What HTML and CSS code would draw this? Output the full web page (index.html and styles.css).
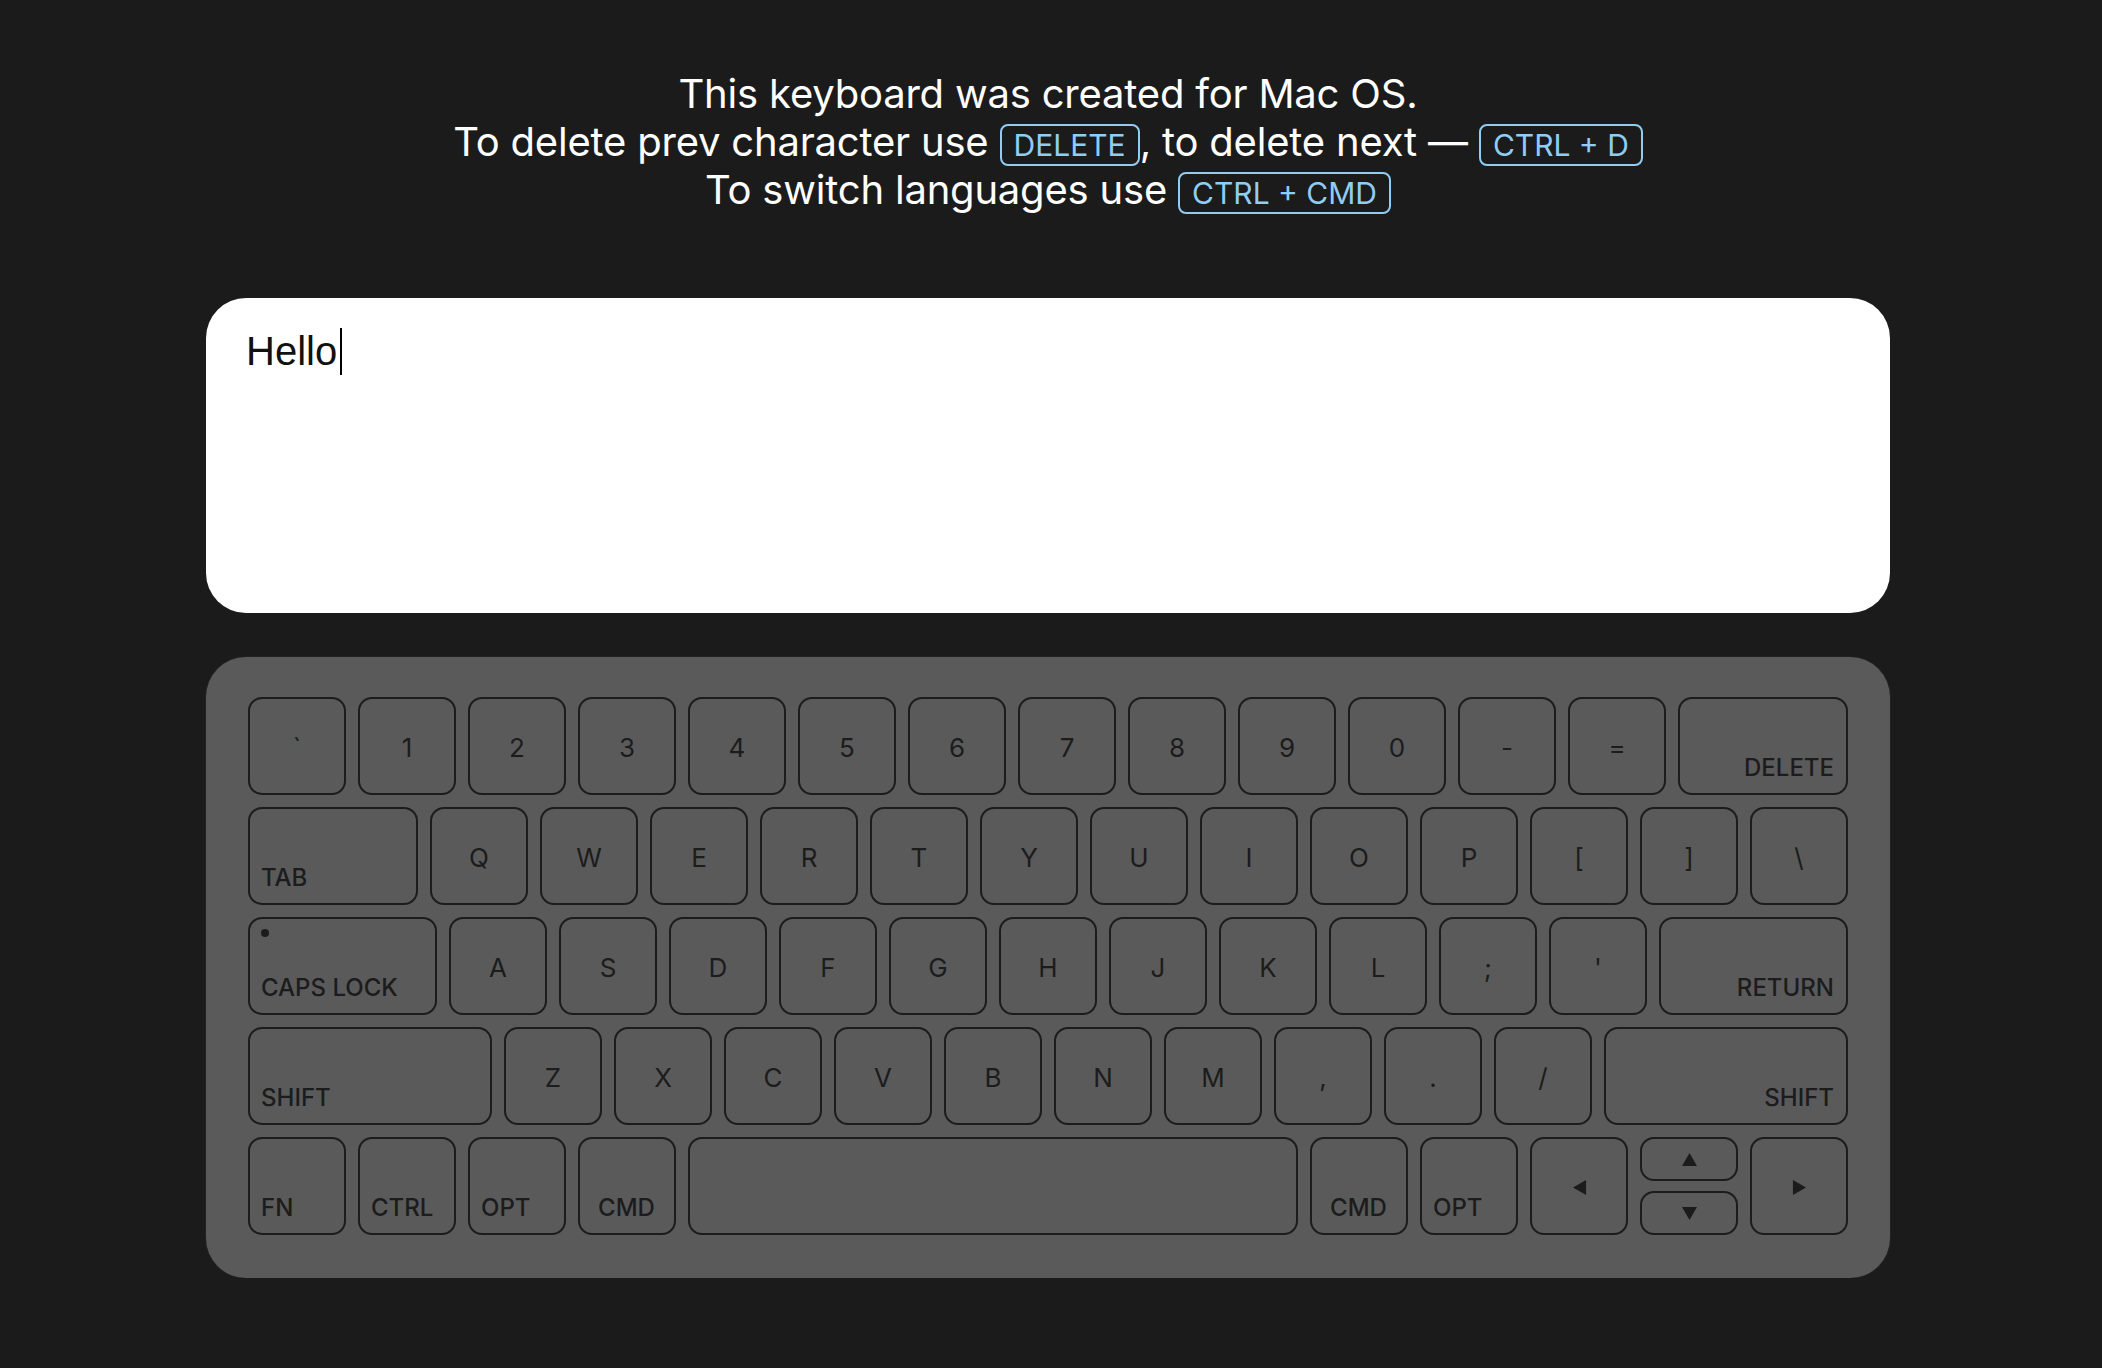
FILE: index.html
```html
<!DOCTYPE html>
<html lang="en">
<head>
    <meta charset="UTF-8">
    <meta name="viewport" content="width=device-width, initial-scale=1.0">
    <title>Virtual keyboard</title>
    <link rel="stylesheet" href="styles.css">
</head>
<body>
    <div class="page">
        <p class="hint">
            This keyboard was created for Mac OS.<br>
            To delete prev character use <span class="kbd">DELETE</span>, to delete next — <span class="kbd">CTRL + D</span><br>
            To switch languages use <span class="kbd">CTRL + CMD</span>
        </p>

        <div class="screen">Hello<span class="caret"></span></div>

        <div class="keyboard">
            <div class="row">
                <div class="key">`</div>
                <div class="key">1</div>
                <div class="key">2</div>
                <div class="key">3</div>
                <div class="key">4</div>
                <div class="key">5</div>
                <div class="key">6</div>
                <div class="key">7</div>
                <div class="key">8</div>
                <div class="key">9</div>
                <div class="key">0</div>
                <div class="key">-</div>
                <div class="key">=</div>
                <div class="key mod wide right">DELETE</div>
            </div>
            <div class="row">
                <div class="key mod wide">TAB</div>
                <div class="key">Q</div>
                <div class="key">W</div>
                <div class="key">E</div>
                <div class="key">R</div>
                <div class="key">T</div>
                <div class="key">Y</div>
                <div class="key">U</div>
                <div class="key">I</div>
                <div class="key">O</div>
                <div class="key">P</div>
                <div class="key">[</div>
                <div class="key">]</div>
                <div class="key">\</div>
            </div>
            <div class="row">
                <div class="key mod wide caps"><span class="led"></span><span>CAPS LOCK</span></div>
                <div class="key">A</div>
                <div class="key">S</div>
                <div class="key">D</div>
                <div class="key">F</div>
                <div class="key">G</div>
                <div class="key">H</div>
                <div class="key">J</div>
                <div class="key">K</div>
                <div class="key">L</div>
                <div class="key">;</div>
                <div class="key">'</div>
                <div class="key mod wide right">RETURN</div>
            </div>
            <div class="row">
                <div class="key mod wide">SHIFT</div>
                <div class="key">Z</div>
                <div class="key">X</div>
                <div class="key">C</div>
                <div class="key">V</div>
                <div class="key">B</div>
                <div class="key">N</div>
                <div class="key">M</div>
                <div class="key">,</div>
                <div class="key">.</div>
                <div class="key">/</div>
                <div class="key mod wide right">SHIFT</div>
            </div>
            <div class="row">
                <div class="key mod">FN</div>
                <div class="key mod">CTRL</div>
                <div class="key mod">OPT</div>
                <div class="key mod center">CMD</div>
                <div class="key wide"></div>
                <div class="key mod center">CMD</div>
                <div class="key mod">OPT</div>
                <div class="key">
                    <svg class="arrow" viewBox="0 0 14 16"><polygon points="0,8 14,0 14,16"/></svg>
                </div>
                <div class="updown">
                    <div class="key half">
                        <svg class="arrow" viewBox="0 0 16 14"><polygon points="8,0 16,14 0,14"/></svg>
                    </div>
                    <div class="key half">
                        <svg class="arrow" viewBox="0 0 16 14"><polygon points="0,0 16,0 8,14"/></svg>
                    </div>
                </div>
                <div class="key">
                    <svg class="arrow" viewBox="0 0 14 16"><polygon points="14,8 0,0 0,16"/></svg>
                </div>
            </div>
        </div>
    </div>
</body>
</html>
```

FILE: styles.css
```css
body {
    margin: 0;
    padding: 70px 6px 0 0;
    background-color: #1b1b1b;
    font-family: Inter, "Noto Sans", sans-serif;
}

.page {
    width: 1684px;
    margin: 0 auto;
}

.hint {
    margin: 0;
    color: #fff;
    font-size: 40px;
    line-height: 48px;
    letter-spacing: -0.2px;
    text-align: center;
}

.kbd {
    display: inline-block;
    padding: 0 12px;
    border: 2px solid #90cdf4;
    border-radius: 8px;
    color: #90cdf4;
    font-size: 30px;
    line-height: 38px;
    letter-spacing: 0;
    vertical-align: baseline;
}

.screen {
    box-sizing: border-box;
    height: 315px;
    margin-top: 84px;
    padding: 30px 40px;
    background-color: #fff;
    border-radius: 40px;
    color: #111;
    font-family: "Liberation Sans", Arial, sans-serif;
    font-size: 40px;
    line-height: 46px;
}

.caret {
    display: inline-block;
    width: 2px;
    height: 47px;
    margin-left: 3px;
    background-color: #000;
    vertical-align: top;
}

.keyboard {
    display: flex;
    flex-direction: column;
    gap: 12px;
    margin-top: 44px;
    padding: 40px 42px 43px;
    background-color: #5a5a5a;
    border-radius: 40px;
    box-shadow: 0 0 0 1px #222;
}

.row {
    display: flex;
    gap: 12px;
}

.key {
    box-sizing: border-box;
    display: flex;
    align-items: center;
    justify-content: center;
    flex: 0 0 98px;
    height: 98px;
    padding-top: 3px;
    border: 2px solid #1c1c1c;
    border-radius: 14px;
    color: #1c1c1c;
    font-size: 26px;
    line-height: 32px;
}

.key.wide {
    flex: 1 1 0;
}

.key.mod {
    align-items: flex-end;
    justify-content: flex-start;
    padding: 0 12px 11px 11px;
    font-size: 24px;
    font-weight: 500;
    line-height: 29px;
}

.key.right {
    justify-content: flex-end;
}

.key.center {
    justify-content: center;
}

.key.caps {
    flex-direction: column;
    align-items: flex-start;
    justify-content: space-between;
    padding-top: 10px;
}

.led {
    width: 8px;
    height: 8px;
    border-radius: 50%;
    background-color: #1c1c1c;
}

.updown {
    display: flex;
    flex-direction: column;
    gap: 10px;
    flex: 0 0 98px;
}

.key.half {
    flex: 0 0 44px;
    height: 44px;
    width: 98px;
    padding-top: 0;
}

.arrow {
    width: 15px;
    height: 15px;
    fill: #1c1c1c;
}
```
